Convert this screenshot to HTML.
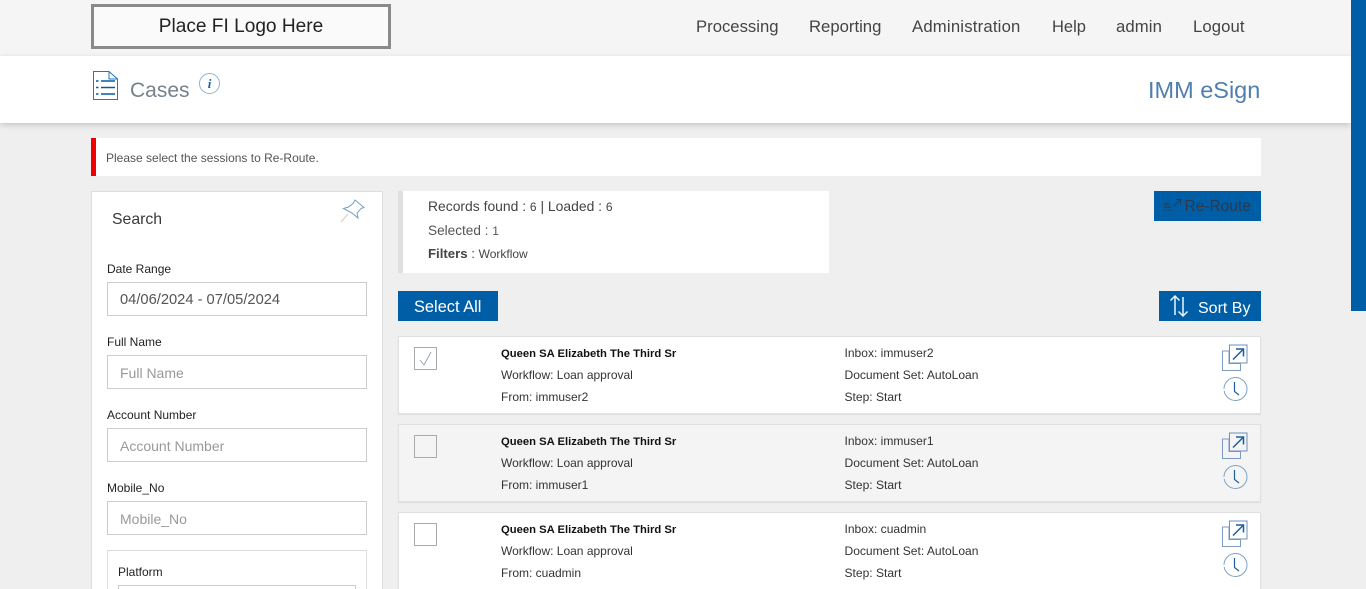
<!DOCTYPE html>
<html><head><meta charset="utf-8"><style>
html,body{margin:0;padding:0;width:1366px;height:589px;overflow:hidden;background:#efefef;font-family:"Liberation Sans",sans-serif;color:#333}
#w{left:0;top:0;width:1366px;height:589px;overflow:hidden;background:#efefef}
div,span.a,svg{position:absolute}
.t{white-space:nowrap;line-height:20px}
.nav{top:17px;color:#444}
.lab{font-size:12px;color:#222;left:107px}
.inp{left:107px;width:258px;height:32px;border:1px solid #ccc;background:#fff}
.ph{font-size:14px;color:#999;left:120px}
.card{left:398px;width:861px;height:76px;border:1px solid #e0e0e0;background:#fff;box-shadow:0 1px 1px #ddd}
.c{font-size:12px;color:#333;left:501px}
.r{font-size:12.05px;color:#333;left:844.5px}
.b{font-weight:bold;color:#111;font-size:11.25px}
.chk{left:414px;width:21px;height:21px;border:1px solid #aaa;background:#fff}
.btn{background:#005ea6}
</style></head><body><div id="w">
<div style="left:0;top:0;width:1366px;height:56px;background:#f5f5f5"></div>
<div style="left:91px;top:4px;width:294px;height:39px;border:3px solid #8a8a8a;background:#fafafa"></div>
<div class="t" style="left:91px;width:300px;text-align:center;top:17px;font-size:19.1px;color:#222">Place FI Logo Here</div>
<div class="t nav" style="left:696px;font-size:16.7px">Processing</div>
<div class="t nav" style="left:809px;font-size:16.7px">Reporting</div>
<div class="t nav" style="left:912px;font-size:16.7px;letter-spacing:.2px">Administration</div>
<div class="t nav" style="left:1052px;font-size:16.5px">Help</div>
<div class="t nav" style="left:1116px;font-size:16.7px;letter-spacing:.1px">admin</div>
<div class="t nav" style="left:1193px;font-size:16.7px;letter-spacing:.1px">Logout</div>

<div style="left:0;top:56px;width:1351px;height:67px;background:#fff;box-shadow:0 2px 6px rgba(0,0,0,.18)"></div>
<svg style="left:92px;top:70px" width="27" height="31" viewBox="0 0 27 31" fill="none" stroke="#1f78c1"><path d="M1.500 1.500H17L25.500 9V29.500H1.500Z" stroke-width="1"/><path d="M17 1.500V9H25.500" stroke-width="1"/><path d="M9 11H23M9 17.500H23M9 24H23" stroke="#005ea6" stroke-width="1.500"/><path d="M4 11H6.500M4 17.500H6.500M4 24H6.500" stroke="#005ea6" stroke-width="1.500"/></svg>
<div class="t" style="left:130px;top:81px;font-size:21px;color:#75828d">Cases</div>
<svg style="left:199px;top:73px" width="21" height="21" viewBox="0 0 21 21"><circle cx="10.500" cy="10.500" r="10" fill="none" stroke="#8fb3d1"/><text x="10.500" y="15" font-family="Liberation Serif" font-style="italic" font-weight="bold" font-size="13" fill="#1d5f9a" text-anchor="middle">i</text></svg>
<div class="t" style="left:1148px;top:80px;font-size:23.5px;color:#4f7fae">IMM eSign</div>

<div style="left:1351px;top:0;width:15px;height:311px;background:#005ea6"></div>

<div style="left:91px;top:138px;width:1170px;height:38px;background:#fff"></div>
<div style="left:91px;top:138px;width:5px;height:38px;background:#f00000"></div>
<div class="t" style="left:106px;top:148px;font-size:12px;color:#555">Please select the sessions to Re-Route.</div>

<div style="left:91px;top:191px;width:290px;height:398px;border:1px solid #ddd;border-bottom:0;background:#fff"></div>
<div class="t" style="left:112px;top:210px;font-size:15.8px;color:#3a3a3a">Search</div>
<svg style="left:339px;top:198px" width="27" height="26" viewBox="0 0 27 26" fill="none" stroke="#6f9fc9"><path d="M16 2L25 9.500L22 10.500L18 15.500L19 20L13 15L4.500 10.500L9.500 9L14 5.500Z"/><path d="M2 24L9 16" stroke="#e6c4c4"/></svg>

<div class="t lab" style="top:259px">Date Range</div>
<div class="inp" style="top:282px"></div>
<div class="t" style="left:120px;top:290px;font-size:14.7px;color:#555">04/06/2024 - 07/05/2024</div>
<div class="t lab" style="top:332px">Full Name</div>
<div class="inp" style="top:355px"></div>
<div class="t ph" style="top:363px">Full Name</div>
<div class="t lab" style="top:405px">Account Number</div>
<div class="inp" style="top:428px"></div>
<div class="t ph" style="top:436px">Account Number</div>
<div class="t lab" style="top:478px">Mobile_No</div>
<div class="inp" style="top:501px"></div>
<div class="t ph" style="top:509px">Mobile_No</div>
<div style="left:107px;top:550px;width:258px;height:39px;border:1px solid #ddd;border-bottom:0"></div>
<div class="t lab" style="left:118px;top:562px">Platform</div>
<div style="left:118px;top:585px;width:236px;height:4px;border:1px solid #ccc;border-bottom:0"></div>

<div style="left:398px;top:191px;width:431px;height:82px;background:#fff"></div>
<div style="left:398px;top:191px;width:5px;height:82px;background:#e0e0e0"></div>
<div class="t" style="left:428px;top:196px;font-size:13.9px;color:#444">Records found : <span style="font-size:12px">6</span> | Loaded : <span style="font-size:12px">6</span></div>
<div class="t" style="left:428px;top:221px;font-size:13.6px;color:#555">Selected : <span style="font-size:12px">1</span></div>
<div class="t" style="left:428px;top:244px;font-size:13.2px;color:#444"><b>Filters</b> : <span style="font-size:12px">Workflow</span></div>

<div class="btn" style="left:1154px;top:191px;width:107px;height:30px"></div>
<svg style="left:1163px;top:198px" width="18" height="14" viewBox="0 0 18 14" fill="none" stroke="#29384a"><path d="M1 6H7M1 9H8" stroke-width="1"/><path d="M1 12H10" stroke-width="1" stroke-dasharray="1 1"/><path d="M11 8L17 2M12.500 1.500H17.500V6.500" stroke-width="1"/></svg>
<div class="t" style="left:1184.500px;top:197px;font-size:15.5px;color:#2a3a4c">Re-Route</div>

<div class="btn" style="left:398px;top:291px;width:100px;height:30px"></div>
<div class="t" style="left:414px;top:297px;font-size:16.4px;color:#fff">Select All</div>
<div class="btn" style="left:1159px;top:291px;width:102px;height:30px"></div>
<svg style="left:1169px;top:294px" width="20" height="24" viewBox="0 0 20 24" fill="none" stroke="#e8f6ff" stroke-width="1.500"><path d="M6 21V2M1.500 6.500L6 2L10.500 6.500"/><path d="M14 3V22M9.500 17.500L14 22L18.500 17.500"/></svg>
<div class="t" style="left:1198px;top:299px;font-size:16px;color:#fff">Sort By</div>

<div class="card" style="top:336px"></div>
<div class="chk" style="top:347px"></div>
<svg style="left:414px;top:347px" width="23" height="23" viewBox="0 0 23 23" fill="none" stroke="#9aa7b3"><path d="M6 13L10 18L17 5"/></svg>
<div class="t c b" style="top:344px">Queen SA Elizabeth The Third Sr</div>
<div class="t c" style="top:365px">Workflow: Loan approval</div>
<div class="t c" style="top:387px">From: immuser2</div>
<div class="t r" style="top:343px">Inbox: immuser2</div>
<div class="t r" style="top:365px">Document Set: AutoLoan</div>
<div class="t r" style="top:387px">Step: Start</div>
<svg style="left:1221px;top:344px" width="28" height="60" viewBox="0 0 28 60" fill="none"><path d="M1.500 7H8V19.500H19.500V26.500H1.500Z" stroke="#7d9cc4"/><rect x="8.500" y="1" width="17.500" height="18" fill="#fff" stroke="#6f8fb9"/><path d="M12 15.500L22 5.500M15 5H22.500V12.500" stroke="#1d5f9a" stroke-width="1.500"/><circle cx="14.500" cy="45" r="11.500" stroke="#7fa3c4" stroke-dasharray="34 2 36"/><path d="M13.500 38V47.500L18 51" stroke="#1d5f9a" stroke-width="1.200"/></svg>

<div class="card" style="top:424px;background:#f4f4f4"></div>
<div class="chk" style="top:435px;background:#f4f4f4"></div>
<div class="t c b" style="top:432px">Queen SA Elizabeth The Third Sr</div>
<div class="t c" style="top:453px">Workflow: Loan approval</div>
<div class="t c" style="top:475px">From: immuser1</div>
<div class="t r" style="top:431px">Inbox: immuser1</div>
<div class="t r" style="top:453px">Document Set: AutoLoan</div>
<div class="t r" style="top:475px">Step: Start</div>
<svg style="left:1221px;top:432px" width="28" height="60" viewBox="0 0 28 60" fill="none"><path d="M1.500 7H8V19.500H19.500V26.500H1.500Z" stroke="#7d9cc4"/><rect x="8.500" y="1" width="17.500" height="18" fill="#f4f4f4" stroke="#6f8fb9"/><path d="M12 15.500L22 5.500M15 5H22.500V12.500" stroke="#1d5f9a" stroke-width="1.500"/><circle cx="14.500" cy="45" r="11.500" stroke="#7fa3c4" stroke-dasharray="34 2 36"/><path d="M13.500 38V47.500L18 51" stroke="#1d5f9a" stroke-width="1.200"/></svg>

<div class="card" style="top:512px;height:90px"></div>
<div class="chk" style="top:523px"></div>
<div class="t c b" style="top:520px">Queen SA Elizabeth The Third Sr</div>
<div class="t c" style="top:541px">Workflow: Loan approval</div>
<div class="t c" style="top:563px">From: cuadmin</div>
<div class="t r" style="top:519px">Inbox: cuadmin</div>
<div class="t r" style="top:541px">Document Set: AutoLoan</div>
<div class="t r" style="top:563px">Step: Start</div>
<svg style="left:1221px;top:520px" width="28" height="60" viewBox="0 0 28 60" fill="none"><path d="M1.500 7H8V19.500H19.500V26.500H1.500Z" stroke="#7d9cc4"/><rect x="8.500" y="1" width="17.500" height="18" fill="#fff" stroke="#6f8fb9"/><path d="M12 15.500L22 5.500M15 5H22.500V12.500" stroke="#1d5f9a" stroke-width="1.500"/><circle cx="14.500" cy="45" r="11.500" stroke="#7fa3c4" stroke-dasharray="34 2 36"/><path d="M13.500 38V47.500L18 51" stroke="#1d5f9a" stroke-width="1.200"/></svg>
</div></body></html>
